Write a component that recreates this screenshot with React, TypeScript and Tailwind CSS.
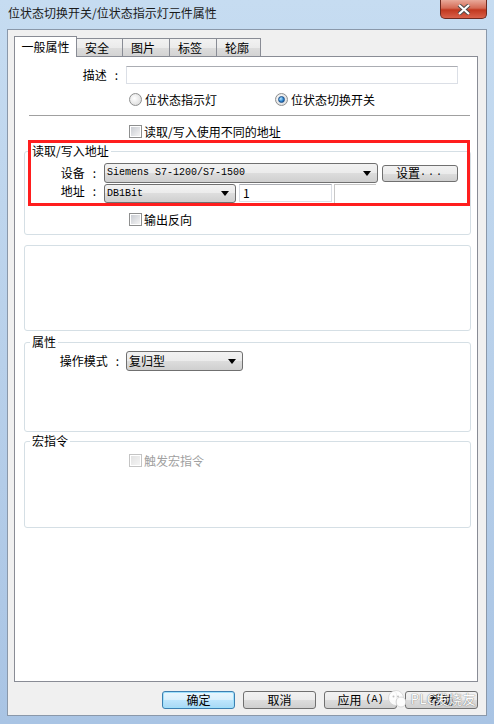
import React from "react";

const font = "font-['Noto_Sans_CJK_SC','Noto_Sans',sans-serif]";
const mono = "font-['Liberation_Mono','Noto_Sans_CJK_SC',monospace]";

function Radio({ checked }: { checked?: boolean }) {
  return (
    <span className="w-[13px] h-[13px] rounded-full border border-[#8e8f8f] bg-[radial-gradient(circle_at_40%_40%,#ffffff,#d4d4d4)] flex items-center justify-center shrink-0">
      {checked && (
        <span className="w-[7px] h-[7px] rounded-full border border-[#1d4f88] bg-[radial-gradient(circle_at_35%_35%,#b9e6ff,#2f86d0_55%,#0e3f7a)]" />
      )}
    </span>
  );
}

function Check({ disabled }: { disabled?: boolean }) {
  return (
    <span
      className={`w-[13px] h-[13px] border flex items-center justify-center shrink-0 bg-white ${
        disabled ? "border-[#c4c4c4]" : "border-[#8e8f8f]"
      }`}
    >
      <span
        className={`w-[9px] h-[9px] bg-gradient-to-br ${
          disabled ? "from-[#e2e2e2] to-[#f4f4f4]" : "from-[#c9ccd2] to-[#f4f4f4]"
        }`}
      />
    </span>
  );
}

function Combo({ text, w, h = 20, latin }: { text: string; w: number; h?: number; latin?: boolean }) {
  return (
    <div
      style={{ width: w, height: h }}
      className="flex items-center justify-between border border-[#707070] rounded-[3px] bg-[linear-gradient(#f2f2f2,#ebebeb_50%,#dddddd_50%,#cfcfcf)] pl-[2px] pr-[6px] shrink-0"
    >
      <span className={latin ? `${mono} text-[10px] leading-[14px]` : "leading-[14px]"}>{text}</span>
      <svg width="8" height="5" viewBox="0 0 8 5">
        <path d="M0 0H8L4 5Z" fill="#000" />
      </svg>
    </div>
  );
}

function Btn({ children, focused }: { children: React.ReactNode; focused?: boolean }) {
  return (
    <div
      className={`w-[73px] h-[18px] rounded-[3px] border flex items-center justify-center leading-[14px] ${
        focused
          ? "border-[#3c7fb1] shadow-[inset_0_0_0_1px_#9fe0fb] bg-[linear-gradient(#eaf6fd,#d9f0fc_50%,#bee6fd_50%,#a7d9f5)]"
          : "border-[#707070] bg-[linear-gradient(#f2f2f2,#ebebeb_50%,#dddddd_50%,#cfcfcf)]"
      }`}
    >
      {children}
    </div>
  );
}

function Label({ w, children }: { w: number; children: React.ReactNode }) {
  return (
    <span style={{ width: w }} className="text-right shrink-0 leading-[14px]">
      {children}
      <span className="ml-[8px] mr-[2px]">:</span>
    </span>
  );
}

export default function App() {
  return (
    <div className={`${font} w-[494px] h-[724px] flex flex-col bg-gradient-to-b from-[#c6dcf1] via-[#b8d0ea] to-[#a9c4e4] text-[12px] text-black overflow-hidden`}>
      {/* Title bar */}
      <div className="h-[29px] flex items-start justify-between pl-[8px] pr-[7px] shrink-0">
        <span className="mt-[6px] leading-[14px] text-[#1a1a1a]">位状态切换开关/位状态指示灯元件属性</span>
        <div className="w-[47px] h-[19px] rounded-b-[5px] border border-t-0 border-[#6e2a20] bg-[linear-gradient(#e9a99a,#d46a55_45%,#c1381f_55%,#d9614a)] flex items-center justify-center">
          <svg width="14" height="11" viewBox="0 0 14 11">
            <path d="M2 1L12 10M12 1L2 10" stroke="#4a4a4a" strokeWidth="4" />
            <path d="M2 1L12 10M12 1L2 10" stroke="#fff" strokeWidth="2.2" />
          </svg>
        </div>
      </div>

      {/* Client */}
      <div className="flex-1 mx-[7px] mb-[8px] border border-[#8a98aa] bg-[#f0f0f0] flex flex-col pl-[6px] pr-[8px] pt-[6px]">
        {/* Tabs */}
        <div className="h-[20px] flex items-end relative z-10">
          <div className="w-[63px] h-[21px] -mb-[1px] bg-white border border-b-0 border-[#898c95] flex items-center justify-center leading-[14px]">
            一般属性
          </div>
          {[
            ["安全", 47],
            ["图片", 48],
            ["标签", 48],
            ["轮廓", 45],
          ].map(([t, w]) => (
            <div
              key={t as string}
              style={{ width: w as number }}
              className="h-[18px] -ml-px first:ml-0 border border-b-0 border-[#898c95] bg-[linear-gradient(#f2f2f2,#ebebeb_50%,#dddddd_50%,#d3d3d3)] flex items-center pl-[8px] leading-[14px]"
            >
              {t}
            </div>
          ))}
        </div>

        {/* Tab panel */}
        <div className="h-[626px] border border-[#898c95] bg-white relative flex flex-col">
          <div className="flex items-center mt-[9px] h-[18px]">
            <Label w={105}>描述</Label>
            <div className="ml-[6px] w-[332px] h-[18px] border border-[#dbdfe6] border-t-[#abadb3] bg-white" />
          </div>

          <div className="flex items-center mt-[9px] h-[13px] ml-[114px]">
            <div className="w-[146px] flex items-center gap-[3px]">
              <Radio />
              <span className="leading-[14px]">位状态指示灯</span>
            </div>
            <div className="flex items-center gap-[3px]">
              <Radio checked />
              <span className="leading-[14px]">位状态切换开关</span>
            </div>
          </div>

          <div className="mt-[9px] ml-[14px] w-[441px] border-t border-[#a0a0a0]" />

          <div className="flex items-center mt-[9px] h-[13px] ml-[114px] gap-[2px]">
            <Check />
            <span className="leading-[14px]">读取/写入使用不同的地址</span>
          </div>

          {/* Read/write address group */}
          <fieldset className="mt-[6px] ml-[9px] w-[447px] h-[91px] border border-[#d5dfe5] rounded-[3px] shrink-0">
            <legend className="ml-[5px] px-[2px] leading-[14px]">读取/写入地址</legend>
            <div className="flex items-center mt-[5px] h-[20px]">
              <Label w={73}>设备</Label>
              <div className="ml-[6px]">
                <Combo text="Siemens S7-1200/S7-1500" w={274} latin />
              </div>
              <div className="ml-[4px] w-[76px] h-[17px] rounded-[3px] border border-[#707070] bg-[linear-gradient(#f2f2f2,#ebebeb_50%,#dddddd_50%,#cfcfcf)] flex items-center justify-center leading-[14px]">
                设置<span className={`${mono} text-[10px] tracking-[2px]`}>...</span>
              </div>
            </div>
            <div className="flex items-start mt-[1px] h-[19px]">
              <Label w={73}>地址</Label>
              <div className="ml-[6px]">
                <Combo text="DB1Bit" w={132} h={19} latin />
              </div>
              <div className="ml-[3px] w-[93px] h-[18px] border border-[#dbdfe6] border-t-[#abadb3] bg-white flex items-center pl-[3px] leading-[14px]">
                1
              </div>
              <div className="ml-[2px] w-[42px] h-[19px] border-t border-l border-[#c8c8c8]" />
            </div>
            <div className="flex items-center mt-[10px] h-[13px] ml-[104px] gap-[2px]">
              <Check />
              <span className="leading-[14px]">输出反向</span>
            </div>
          </fieldset>

          <div className="mt-[10px] ml-[9px] w-[447px] h-[86px] border border-[#d5dfe5] rounded-[3px] shrink-0" />

          {/* Attributes group */}
          <fieldset className="mt-[4px] ml-[9px] w-[447px] h-[97px] border border-[#d5dfe5] rounded-[3px] shrink-0">
            <legend className="ml-[5px] px-[2px] leading-[14px]">属性</legend>
            <div className="flex items-center mt-[2px] h-[20px]">
              <Label w={96}>操作模式</Label>
              <div className="ml-[5px]">
                <Combo text="复归型" w={117} />
              </div>
            </div>
          </fieldset>

          {/* Macro group */}
          <fieldset className="mt-[2px] ml-[9px] w-[447px] h-[94px] border border-[#d5dfe5] rounded-[3px] shrink-0">
            <legend className="ml-[5px] px-[2px] leading-[14px]">宏指令</legend>
            <div className="flex items-center mt-[6px] h-[13px] ml-[104px] gap-[2px]">
              <Check disabled />
              <span className="leading-[14px] text-[#a0a0a0]">触发宏指令</span>
            </div>
          </fieldset>

          {/* Highlight annotation */}
          <div className="absolute left-[13px] top-[83px] w-[442px] h-[66px] border-[3px] border-[#ff1e1e] pointer-events-none" />
        </div>

        {/* Dialog buttons */}
        <div className="mt-[9px] h-[18px] flex justify-end gap-[8px] relative">
          <Btn focused>确定</Btn>
          <Btn>取消</Btn>
          <Btn>
            应用<span className={`${mono} text-[10px] ml-[4px]`}>(A)</span>
          </Btn>
          <Btn>帮助</Btn>
          <div className="absolute right-[2px] -top-[2px] flex items-center gap-[4px] pointer-events-none opacity-90">
            <svg width="20" height="20" viewBox="0 0 20 20">
              <circle cx="9" cy="9" r="7.5" fill="#fff" stroke="#d0d0d0" strokeWidth="0.8" />
              <circle cx="14" cy="13" r="5" fill="#fff" stroke="#d0d0d0" strokeWidth="0.8" />
              <circle cx="6.5" cy="7.5" r="1" fill="#bbb" />
              <circle cx="11" cy="7.5" r="1" fill="#bbb" />
            </svg>
            <span className="text-[13px] leading-[16px] text-white [text-shadow:0_0_1px_#777,0_0_1px_#777] tracking-[0.5px]">
              PLC发烧友
            </span>
          </div>
        </div>
      </div>
    </div>
  );
}
